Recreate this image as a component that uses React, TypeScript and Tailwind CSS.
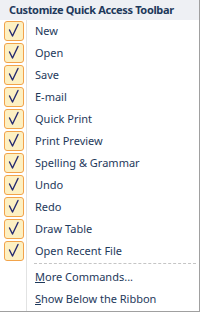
const items = [
  "New",
  "Open",
  "Save",
  "E-mail",
  "Quick Print",
  "Print Preview",
  "Spelling & Grammar",
  "Undo",
  "Redo",
  "Draw Table",
  "Open Recent File",
];

function CheckBox() {
  return (
    <div className="relative h-[20px] w-[20px] rounded-[3px] border border-[#f2a34a] bg-[#fdf0c2]">
      <svg className="absolute -left-px -top-px" width="20" height="20" viewBox="0 0 20 20" fill="none">
        <path d="M5.5 9 L8.5 15 L14 3.5" stroke="#262b70" strokeWidth="1.4" strokeLinecap="round" strokeLinejoin="round" />
      </svg>
    </div>
  );
}

export default function App() {
  return (
    <div
      className="flex h-[312px] w-[200px] flex-col border-r border-b border-[#a0a0a0] bg-white text-[11px] text-[#1e395b]"
      style={{ fontFamily: '"Noto Sans", "Open Sans", sans-serif' }}
    >
      <div className="flex h-[20px] shrink-0 items-center whitespace-nowrap bg-[#eef0f4] pl-[9px] font-bold tracking-[-0.35px] text-[#1e395b]">
        Customize Quick Access Toolbar
      </div>
      <div className="flex flex-1 bg-[linear-gradient(to_right,#ffffff_26px,#e2e3e3_26px,#e2e3e3_27px,#ffffff_27px)]">
        <div className="flex w-full flex-col">
          {items.map((label) => (
            <div key={label} className="flex h-[22px] items-center">
              <div className="flex w-[27px] shrink-0 items-center pl-[4px]">
                <CheckBox />
              </div>
              <span className="whitespace-nowrap pl-[8px]">{label}</span>
            </div>
          ))}
          <div className="ml-[34px] mr-[3px] mt-[1px] border-t border-dashed border-[#c5c5c5]" />
          <div className="mt-[2px] flex h-[22px] items-center pl-[35px]">
            <span>
              <span className="underline">M</span>ore Commands...
            </span>
          </div>
          <div className="flex h-[22px] items-center pl-[35px]">
            <span>
              <span className="underline">S</span>how Below the Ribbon
            </span>
          </div>
        </div>
      </div>
    </div>
  );
}
